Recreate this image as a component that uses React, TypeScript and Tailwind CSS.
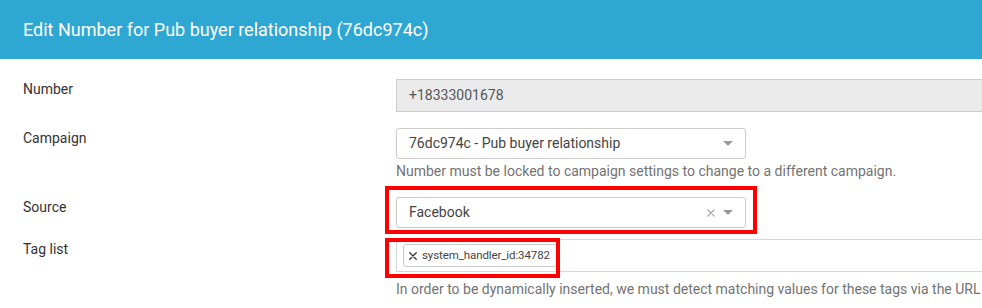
import React from 'react';

const font = { fontFamily: "Roboto, 'Noto Sans', sans-serif" };

function Caret() {
  return (
    <svg width="10" height="5" viewBox="0 0 10 5" className="shrink-0">
      <path d="M0 0 L10 0 L5 5 Z" fill="#999" />
    </svg>
  );
}

function Cross({ size = 8, color = '#999', stroke = 1.2 }: { size?: number; color?: string; stroke?: number }) {
  return (
    <svg width={size} height={size} viewBox="0 0 10 10" className="shrink-0">
      <path d="M1 1 L9 9 M9 1 L1 9" stroke={color} strokeWidth={stroke * (10 / size)} strokeLinecap="round" />
    </svg>
  );
}

function Row({ label, children, className = '' }: { label: string; children: React.ReactNode; className?: string }) {
  return (
    <div className={`flex ${className}`}>
      <div className="w-[373px] shrink-0 text-[14px] leading-5 text-[#333]">{label}</div>
      <div className="w-[620px] shrink-0 relative">{children}</div>
    </div>
  );
}

export default function App() {
  return (
    <div className="w-[982px] h-[308px] overflow-hidden bg-white" style={font}>
      {/* Header */}
      <div className="h-[59px] bg-[#2ea7d3] flex items-center pl-[23px]">
        <h1 className="text-[18px] text-white font-normal">
          Edit Number for Pub buyer relationship (76dc974c)
        </h1>
      </div>

      <div className="pl-[23px]">
        <Row label="Number" className="mt-[20px]">
          <div className="h-[33px] bg-[#ebebeb] border border-[#ccc] flex items-center pl-[12px] text-[14px] text-[#555]">
            +18333001678
          </div>
        </Row>

        <Row label="Campaign" className="mt-[16px]">
          <div className="w-[350px] h-[31px] border border-[#ccc] rounded-[3px] flex items-center pl-[12px] pr-[12px] text-[14px] text-[#444]">
            <span className="flex-1">76dc974c - Pub buyer relationship</span>
            <Caret />
          </div>
          <div className="mt-[2px] text-[14px] leading-5 text-[#737373]">
            Number must be locked to campaign settings to change to a different campaign.
          </div>
        </Row>

        <Row label="Source" className="mt-[16px]">
          <div className="w-[350px] h-[31px] border border-[#ccc] rounded-[3px] flex items-center pl-[12px] pr-[12px] text-[14px] text-[#444]">
            <span className="flex-1">Facebook</span>
            <span className="mr-[8px]"><Cross size={8} color="#999" stroke={1.1} /></span>
            <Caret />
          </div>
          <div className="absolute left-[-11px] top-[-11px] w-[372px] h-[48px] border-[4px] border-[#f00] pointer-events-none" />
        </Row>

        <Row label="Tag list" className="mt-[11px]">
          <div className="h-[33px] border border-[#d3d7de] flex items-center pl-[6px]">
            <div className="h-[23px] flex items-center gap-[5px] border border-[#ccc] rounded-[3px] pl-[5px] pr-[6px] text-[11.5px] text-[#444] tracking-[-0.1px]">
              <Cross size={8} color="#333" stroke={1.3} />
              <span>system_handler_id:34782</span>
            </div>
          </div>
          <div className="absolute left-[-11px] top-[-1px] w-[175px] h-[40px] border-[4px] border-[#f00] pointer-events-none" />
          <div className="mt-[7px] text-[14px] leading-5 text-[#737373] whitespace-nowrap">
            In order to be dynamically inserted, we must detect matching values for these tags via the URL
          </div>
        </Row>
      </div>
    </div>
  );
}
